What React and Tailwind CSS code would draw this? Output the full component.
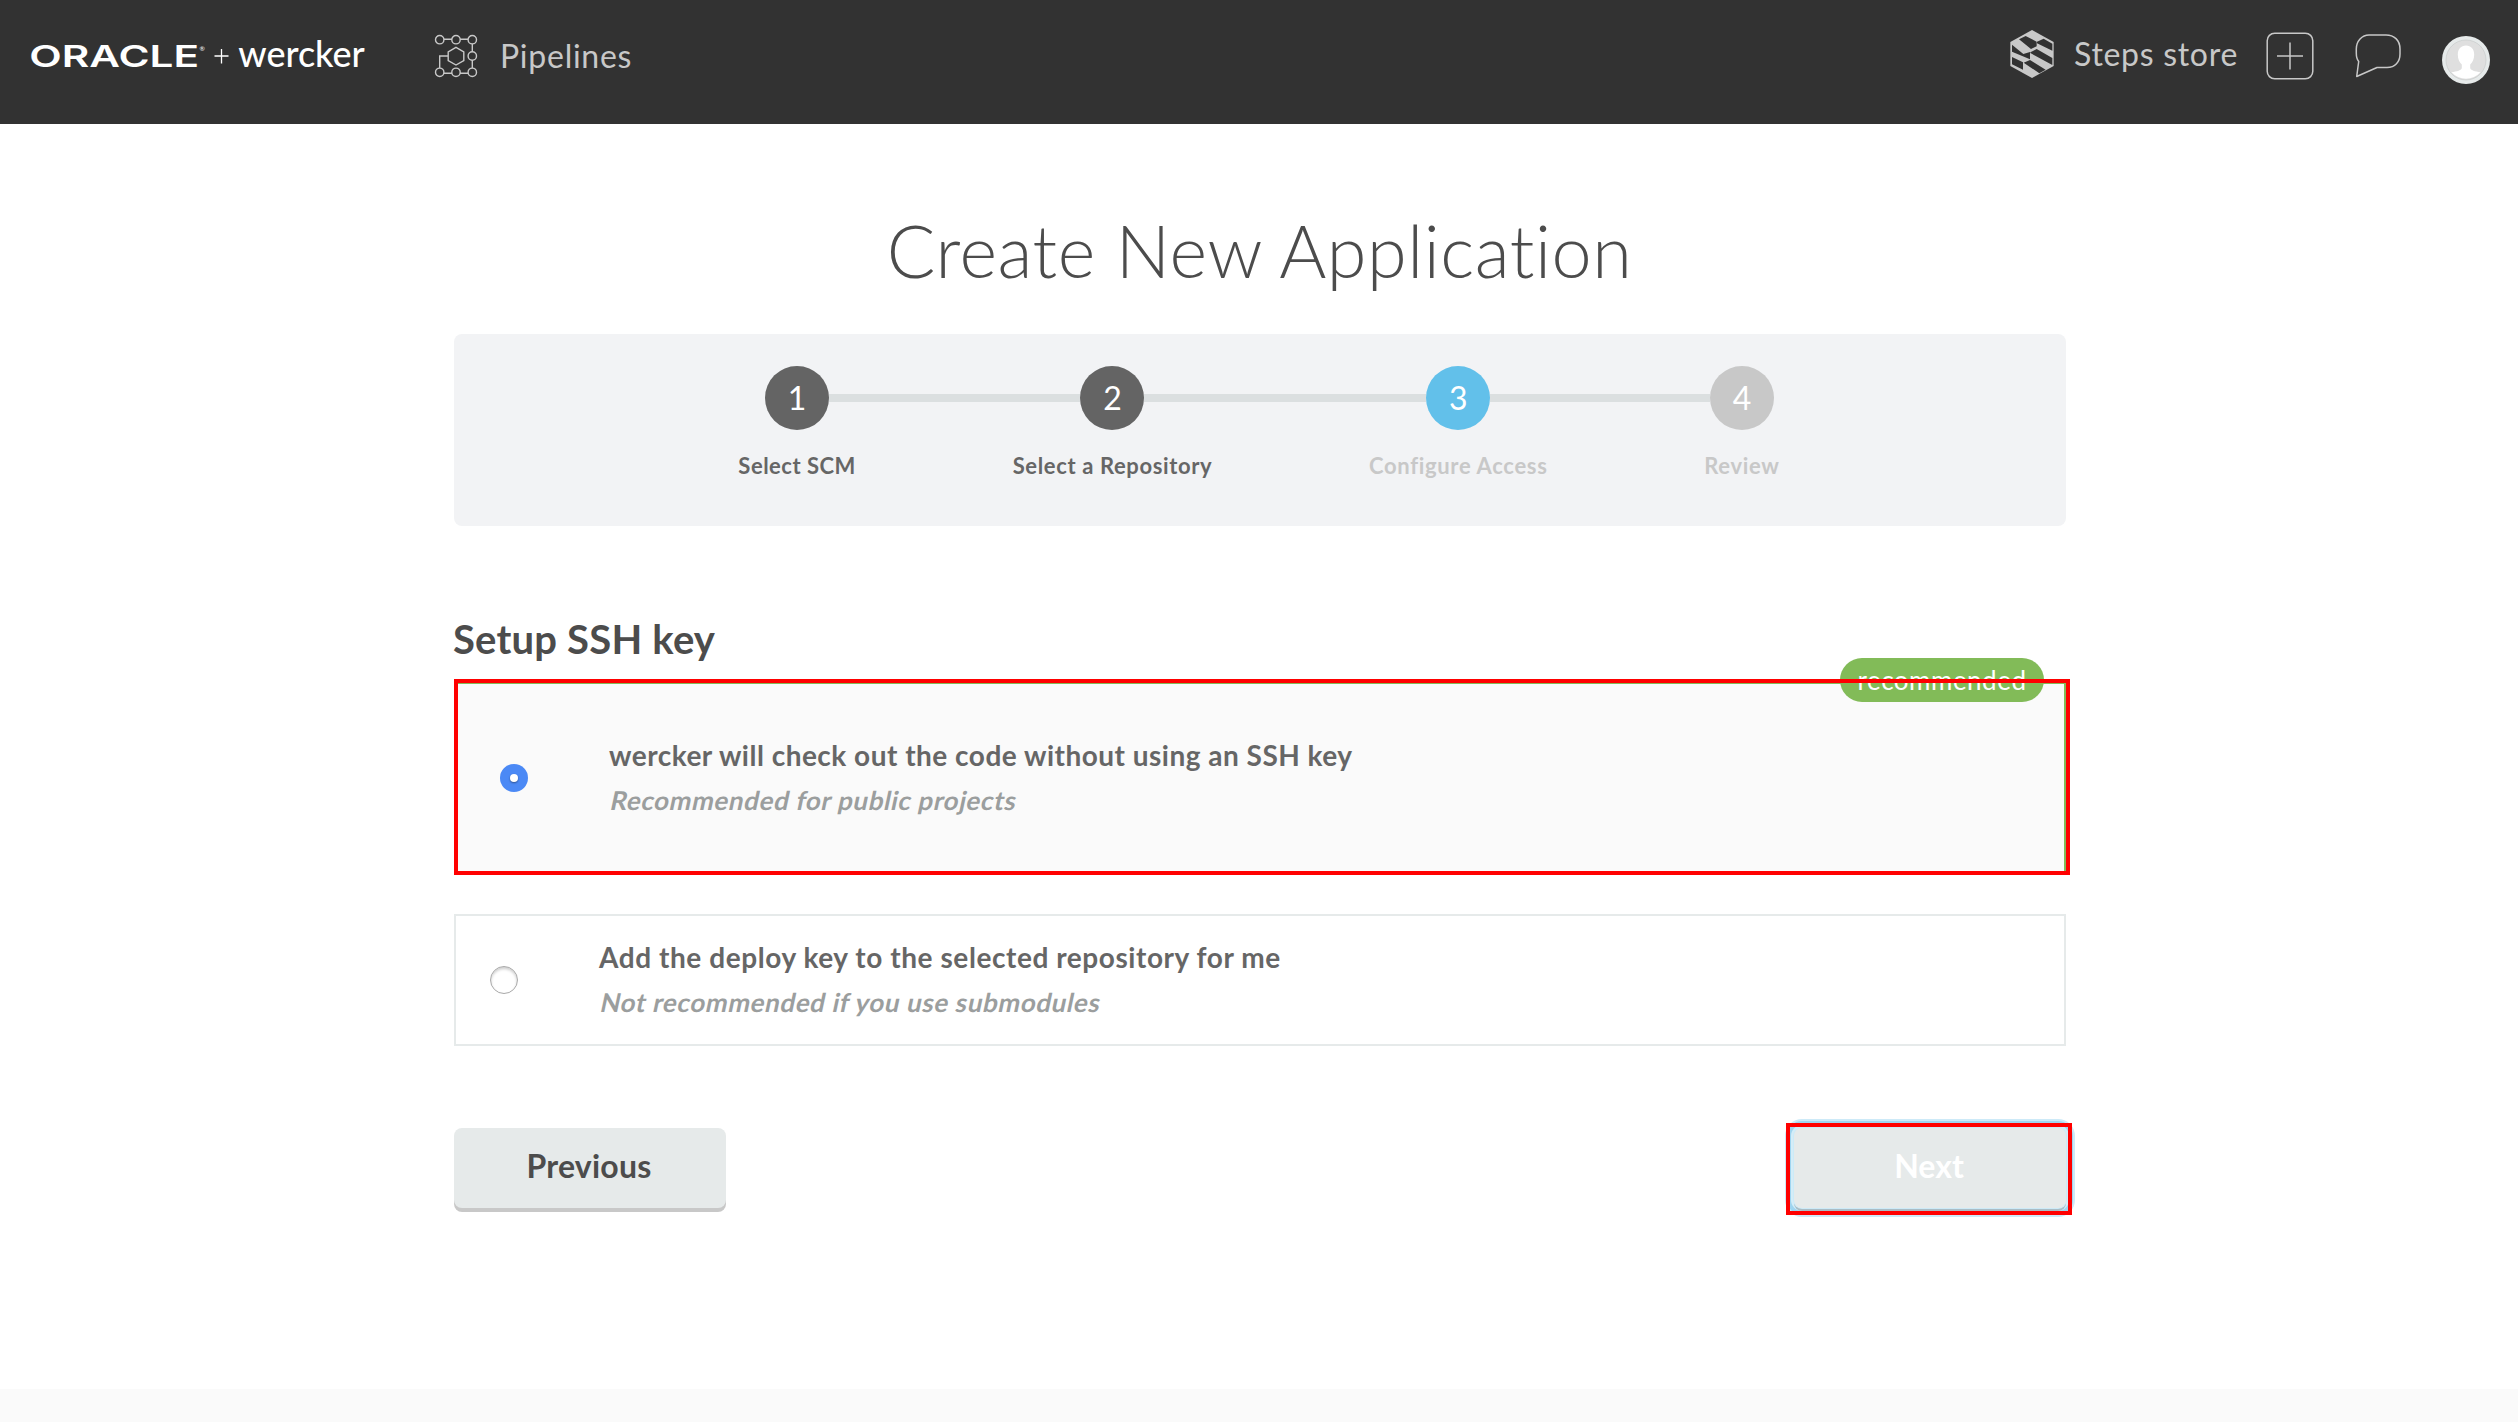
import React from "react";

const steps = [
  { n: 1, label: "Select SCM", circle: "bg-[#646464]", text: "text-[#666666] tracking-[0.5px]" },
  { n: 2, label: "Select a Repository", circle: "bg-[#646464]", text: "text-[#666666] tracking-[0.62px]" },
  { n: 3, label: "Configure Access", circle: "bg-[#62c0ea]", text: "text-[#c8c8c8] tracking-[0.67px]" },
  { n: 4, label: "Review", circle: "bg-[#c8c8c8]", text: "text-[#c8c8c8] tracking-[0.67px]" },
];

function Logo() {
  return (
    <svg className="mt-[30px] h-12 w-[340px]" viewBox="28 30 340 48" fill="#fff">
      <text x="29.3" y="67.3" fontFamily="Inter" fontWeight="600" fontSize="30.5" textLength="169.700" lengthAdjust="spacingAndGlyphs">ORACLE</text>
      <text x="199.500" y="50.5" fontFamily="Lato" fontSize="6.5">®</text>
      <path d="M214.500 56h14M221.500 49v14.500" stroke="#fff" strokeWidth="1.3" />
      <text x="238.300" y="67.3" fontFamily="Lato" fontWeight="500" fontSize="37" textLength="126.500" lengthAdjust="spacingAndGlyphs">wercker</text>
    </svg>
  );
}

function PipelinesIcon() {
  const dots = [[5.7, 5.7], [22, 5.7], [38.3, 5.7], [38.3, 22], [5.7, 38.3], [22, 38.3], [38.3, 38.3]];
  return (
    <svg className="mt-[34px] size-11" viewBox="0 0 44 44" fill="none" stroke="#c8c8c8" strokeWidth="1.4">
      <path d="M10 5.3h8M26 5.3h8M38.3 10v8M38.3 26v8M10 39.3h8M26 39.3h8M14.2 22H5.7v12M22 13.4l7.8 4.5v8.6L22 31l-7.8-4.5v-8.6z" />
      {dots.map(([x, y]) => <circle key={x + "-" + y} cx={x} cy={y} r="4.2" />)}
    </svg>
  );
}

function StoreIcon({ className }) {
  return (
    <svg className={className} viewBox="30 30 130 144">
      <path fill="#c8c8c8" d="M95 30l65 36v72l-65 36-65-36V66z" />
      <path fill="#323232" d="M56 58l20-10 33 17v14l-17 8zM110 65l20-9 26 15v21l-46-22zM35 74l34 28 20-6v22l-54-23zM90 97l19-10 47 27v21l-66-36zM35 111l33 16v22l-33-16zM70 128l19-8 47 29-19 11z" />
    </svg>
  );
}

function Option({ selected, title, note, titleClass }) {
  return (
    <div className="flex items-start">
      <span
        className={
          selected
            ? "flex size-7 items-center justify-center rounded-full bg-[#4b89f5]"
            : "size-7 rounded-full border border-[#a9a9a9] bg-white shadow-[inset_0_2px_3px_rgba(0,0,0,0.2)]"
        }
      >
        {selected && <span className="size-2 rounded-full bg-white shadow-[0_1px_2px_rgba(0,0,0,0.4)]" />}
      </span>
      <div className="-mt-[31px] ml-[81px] flex flex-col items-start leading-[45px] font-bold">
        <span className={"text-[28px] text-[#666666] " + titleClass}>{title}</span>
        <span className="origin-[0_32px] -skew-x-[12deg] text-[26px] tracking-[0.6px] text-[#9b9e9e]">{note}</span>
      </div>
    </div>
  );
}

export default function App() {
  return (
    <div className="flex h-[1422px] w-full flex-col bg-white font-[Lato,sans-serif]">
      <header className="flex h-[124px] shrink-0 items-start bg-[#323232] pr-7 pl-7 text-[32px] leading-10 text-[#c8c8c8]">
        <Logo />
        <span className="ml-[66px]"><PipelinesIcon /></span>
        <span className="mt-9 ml-[22px] tracking-[0.75px]">Pipelines</span>
        <div className="ml-auto flex items-start">
          <StoreIcon className="mt-[30px] h-12 w-11" />
          <span className="mt-[34px] ml-5 tracking-[0.7px]">Steps store</span>
          <svg className="mt-8 ml-7 size-12" viewBox="0 0 48 48" fill="none" stroke="#c8c8c8" strokeWidth="1.5">
            <rect x="1.2" y="1.2" width="45.600" height="45.600" rx="7.5" />
            <path d="M11 24h26M24 10.500v27" />
          </svg>
          <svg className="mt-8 ml-10 size-12" viewBox="0 0 48 48" fill="none" stroke="#c8c8c8" strokeWidth="1.5" strokeLinejoin="round">
            <path d="M15 3h17c8 0 14 5 14 14v5c0 8-5 13.500-13 13.500H23L2.700 44.500l2-15C3 27.500 2.300 25 2.300 21v-4C2.300 9 8 3 15 3z" />
          </svg>
          <svg className="mt-9 ml-10 size-12" viewBox="0 0 48 48">
            <circle cx="24" cy="24" r="24" fill="#e6eaea" />
            <circle cx="24" cy="24" r="20" fill="#dfdfdf" stroke="#c4c8c8" strokeWidth=".6" />
            <path fill="#fff" d="M24 9.500c5 0 8.200 3.500 8.200 9 0 4.500-1.700 8.200-4 10v3.200c0 2.600 5 3.600 10.300 4.600a19.500 19.500 0 0 1-29 0c5.300-1 10.300-2 10.300-4.600v-3.200c-2.300-1.800-4-5.500-4-10 0-5.500 3.200-9 8.200-9z" />
          </svg>
        </div>
      </header>

      <main className="ml-[454px] flex w-[1612px] flex-col pt-[76px]">
        <h1 className="pr-px text-center text-[72px] leading-[100px] font-light tracking-[0.54px] text-[#4c4c4c]">Create New Application</h1>

        <ol className="mt-[34px] flex h-48 justify-center rounded-lg bg-[#f2f3f5] pt-8 pr-0.5">
          {steps.map((s, i) => (
            <li key={s.n} className="flex flex-col">
              <div className="flex items-center">
                <span className={i === 0 ? "h-2 flex-1" : "h-2 flex-1 bg-[#dbdfe0]"} />
                <span className={"flex size-16 items-center justify-center rounded-full text-[32px] leading-none text-white " + s.circle}>{s.n}</span>
                <span className={i === steps.length - 1 ? "h-2 flex-1" : "h-2 flex-1 bg-[#dbdfe0]"} />
              </div>
              <span className={"mt-[21px] px-[78.4px] text-[22px] leading-[30px] font-bold " + s.text}>{s.label}</span>
            </li>
          ))}
        </ol>

        <h2 className="mt-[89px] -ml-px text-[40px] leading-[49px] font-bold tracking-[0.2px] text-[#4c4c4c]">Setup SSH key</h2>

        <section className="relative mt-[18px] h-48 border-2 border-[#82bb58] bg-[#fafafa] pt-20 pl-11">
          <Option selected title="wercker will check out the code without using an SSH key" note="Recommended for public projects" titleClass="tracking-[0.49px]" />
          <span className="absolute -top-[26px] right-5 flex h-11 w-51 items-center justify-center rounded-full bg-[#82bb58] text-[26px] tracking-[0.5px] text-white">recommended</span>
          <span className="absolute -top-[5px] -right-1.5 -bottom-[3px] -left-0.5 border-4 border-[#ff0000]" />
        </section>

        <section className="mt-10 h-33 border-2 border-[#e6eaea] bg-white pt-[50px] pl-[34px]">
          <Option title="Add the deploy key to the selected repository for me" note="Not recommended if you use submodules" titleClass="tracking-[0.57px]" />
        </section>

        <div className="mt-[82px] flex justify-between text-[32px] leading-[76px] font-bold">
          <button className="h-20 w-68 rounded-lg bg-[#e6eaea] pr-0.5 pb-1 tracking-[0.2px] text-[#4c4c4c] shadow-[0_4px_0_#c8c8c8]">Previous</button>
          <div className="relative">
            <button className="h-20 w-68 rounded-lg bg-[#e6eaea] pr-0.5 pb-1 text-white shadow-[0_0_0_1px_#cdeaf7,0_3px_0_#a9bcc5,0_0_0_3px_#d4edf8,0_0_0_7px_#9fd5f0,0_0_0_9px_#cdeaf8]">Next</button>
            <span className="absolute -top-[5px] -right-1.5 -bottom-[7px] -left-2 border-4 border-[#ff0000]" />
          </div>
        </div>
      </main>

      <footer className="mt-auto h-[33px] shrink-0 bg-[#fafafa]" />
    </div>
  );
}
